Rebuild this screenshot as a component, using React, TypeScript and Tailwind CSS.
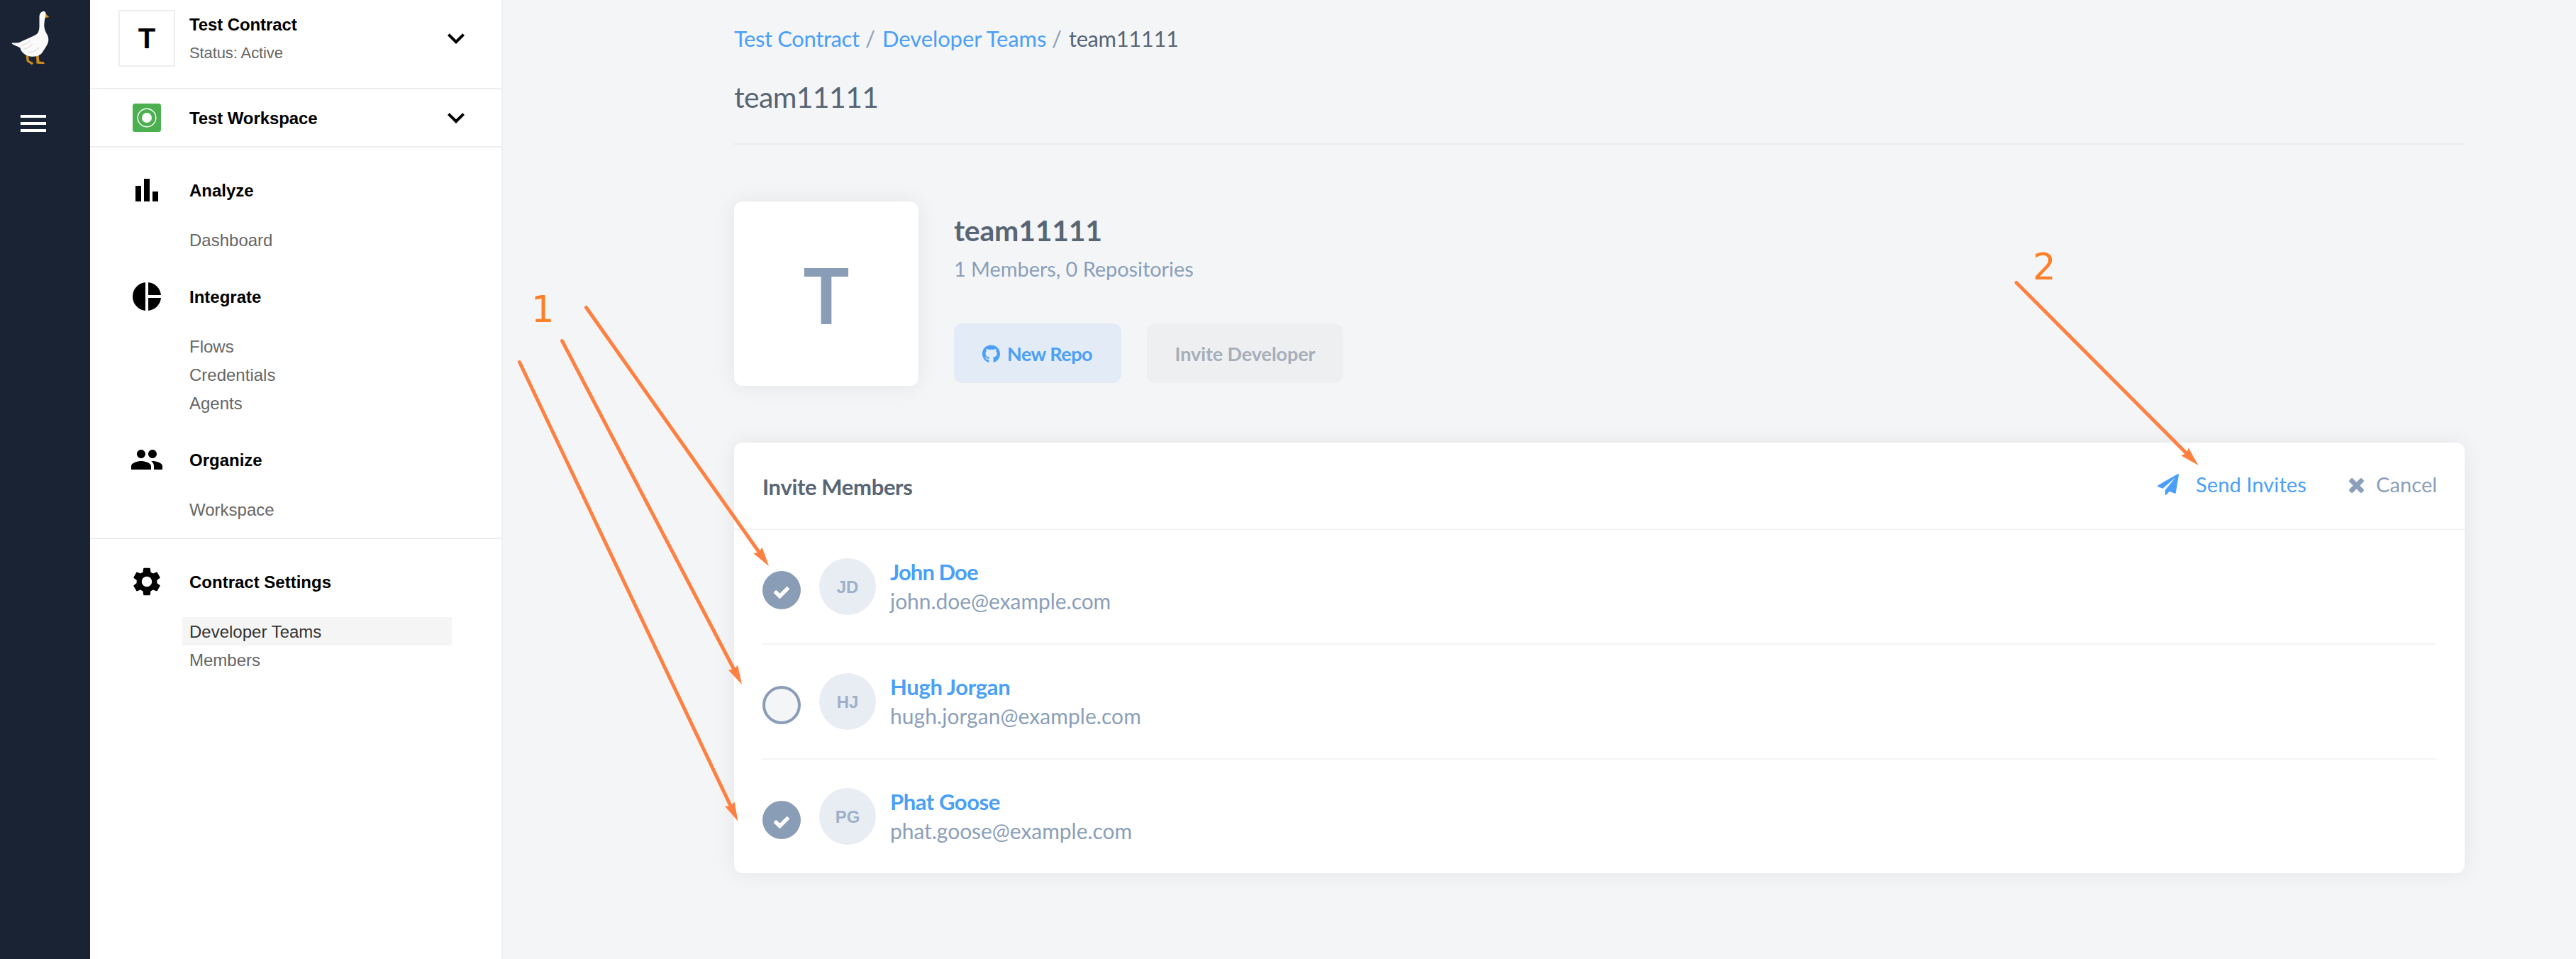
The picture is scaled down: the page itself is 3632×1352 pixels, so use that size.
import React from "react";
import { MdBarChart, MdExpandMore, MdMenu, MdPeople, MdPieChart, MdSettings } from "react-icons/md";
import { FaGithub } from "react-icons/fa";
import type { IconType } from "react-icons";

function GooseLogo() {
  return (
    <svg viewBox="0 0 60 84" className="ml-[14px] mt-[12px] h-[84px] w-[60px]" fill="none">
      <path d="M23 65.5 L23.5 71 L26 76 L31 79.5 L33 77 L28 76 L26.5 71 L26.5 65.5Z" fill="#c98a1c" />
      <path d="M37 65 L37.5 77.5 L49 78 L47.5 75.5 L41.5 74.5 L40.5 65Z" fill="#c98a1c" />
      <path d="M24 66 L25 74 L32 77.5 M39 66 L39.3 76 L48 77" stroke="#cf8e1c" strokeWidth="2.6" />
      <path d="M49 6 L55.4 12 L50 13.2 L48.5 8Z" fill="#cf8e1c" />
      <path
        d="M41.5 11 C42 5.5 45.5 3.5 48 4 C50.5 4.4 51 7 50.2 10 C49.2 14 48.5 18 48.3 22 C48 27 49.3 31 51.5 35 C55 40.5 55.2 46 52.5 51 C50 55.5 47.5 59 45 63 C41 67.5 33 69 26.5 67 C20 65 15.5 61 14.5 55.5 C11 53.5 6.5 52 3.3 50 C2 49 3 48 5 48.2 C9 48.6 11.5 48.4 14 47.5 C22 43.5 33 39.5 38 36 C41 33.5 41.6 28 41.5 23Z"
        fill="#fafafa"
      />
      <path d="M16 52 C21 51 25 49 29 45 M19 57 C24 57 28 54 32 50 M25 62 C31 62 37 59 41 55" stroke="#e2e2e2" strokeWidth="1.4" />
    </svg>
  );
}

function CheckIcon() {
  return (
    <svg viewBox="121 334 1550 1188" className="mt-[6px] h-[17px] w-[22px]" fill="#fff">
      <path d="M1671 566q0 40-28 68l-724 724-136 136q-28 28-68 28t-68-28l-136-136-362-362q-28-28-28-68t28-68l136-136q28-28 68-28t68 28l294 295 656-657q28-28 68-28t68 28l136 136q28 28 28 68z" />
    </svg>
  );
}

function PlaneIcon() {
  return (
    <svg viewBox="0 0 1792 1792" className="mt-[6px] h-[30px] w-[30px]" fill="#4a9ff8">
      <path d="M1764 11q33 24 27 64l-256 1536q-5 29-32 45-14 8-31 8-11 0-24-5l-453-185-242 295q-18 23-49 23-13 0-22-4-19-7-30.5-23.5t-11.5-36.5v-349l864-1059-1069 925-395-162q-37-14-40-55-2-40 32-59l1664-960q15-9 32-9 20 0 36 11z" />
    </svg>
  );
}

function CrossIcon() {
  return (
    <svg viewBox="302 366 1188 1188" className="mt-[12px] h-[21px] w-[21px]" fill="#8b9fba">
      <path d="M1490 1322q0 40-28 68l-136 136q-28 28-68 28t-68-28l-294-294-294 294q-28 28-68 28t-68-28l-136-136q-28-28-28-68t28-68l294-294-294-294q-28-28-28-68t28-68l136-136q28-28 68-28t68 28l294 294 294-294q28-28 68-28t68 28l136 136q28 28 28 68t-28 68l-294 294 294 294q28 28 28 68z" />
    </svg>
  );
}

function WorkspaceIcon() {
  return (
    <svg viewBox="0 0 40 40" className="ml-5 h-10 w-10" fill="none">
      <rect width="40" height="40" rx="3.5" fill="#4caf50" />
      <circle cx="20" cy="20" r="12.8" stroke="#fff" strokeWidth="1.4" />
      <circle cx="20" cy="20" r="7" fill="#fff" />
    </svg>
  );
}

type NavSection = { title: string; icon: IconType; items: string[]; active?: string };

const workspaceSections: NavSection[] = [
  { title: "Analyze", icon: MdBarChart, items: ["Dashboard"] },
  { title: "Integrate", icon: MdPieChart, items: ["Flows", "Credentials", "Agents"] },
  { title: "Organize", icon: MdPeople, items: ["Workspace"] },
];

const settingsSection: NavSection = {
  title: "Contract Settings",
  icon: MdSettings,
  items: ["Developer Teams", "Members"],
  active: "Developer Teams",
};

function Section({ title, icon: Icon, items, active }: NavSection) {
  return (
    <section className="pt-9">
      <h3 className="flex h-12 items-center gap-9 pl-14 text-[24px] font-bold text-black">
        <Icon className="h-12 w-12 shrink-0" />
        <span className="pt-0.5 leading-10">{title}</span>
      </h3>
      <ul className="pt-[26px] pl-[130px] text-[24px] leading-[42px] text-[#666]">
        {items.map((item) => (
          <li
            key={item}
            className={item === active ? "h-10 w-[380px] bg-[#f5f5f5] pl-[10px] text-[#333]" : "h-10 w-[380px] pl-[10px]"}
          >
            {item}
          </li>
        ))}
      </ul>
    </section>
  );
}

function Sidebar() {
  return (
    <nav className="w-[582px] shrink-0 border-r-2 border-[#eeeff0] bg-white font-['Liberation_Sans',Arial,sans-serif]">
      <div className="flex h-[126px] items-start border-b-2 border-[#eee] pt-[14px] pl-10">
        <div className="flex h-20 w-20 items-center justify-center border-2 border-[#eee] text-[40px] leading-none font-bold text-black">
          T
        </div>
        <div className="ml-5 w-[352px] pt-px">
          <p className="text-[24px] leading-10 font-bold tracking-[-0.1px] text-black">Test Contract</p>
          <p className="text-[22px] leading-10 tracking-[-0.1px] text-[#666]">Status: Active</p>
        </div>
        <MdExpandMore className="mt-4 h-12 w-12 text-black" />
      </div>
      <div className="flex h-[82px] items-center border-b-2 border-[#eee] pl-10">
        <WorkspaceIcon />
        <p className="ml-10 w-[352px] pt-0.5 text-[24px] leading-10 font-bold tracking-[-0.1px] text-black">Test Workspace</p>
        <MdExpandMore className="h-12 w-12 text-black" />
      </div>
      <div className="border-b-2 border-[#eee] pb-5">
        {workspaceSections.map((s) => (
          <Section key={s.title} {...s} />
        ))}
      </div>
      <Section {...settingsSection} />
    </nav>
  );
}

const members = [
  {
    initials: "JD",
    name: "John Doe",
    email: "john.doe@example.com",
    checked: true,
    nameClass: "tracking-[-0.9px]",
    emailClass: "tracking-[-0.05px]",
  },
  {
    initials: "HJ",
    name: "Hugh Jorgan",
    email: "hugh.jorgan@example.com",
    checked: false,
    nameClass: "tracking-[-0.35px]",
    emailClass: "tracking-[0.05px]",
  },
  {
    initials: "PG",
    name: "Phat Goose",
    email: "phat.goose@example.com",
    checked: true,
    nameClass: "tracking-[-0.45px]",
    emailClass: "tracking-[-0.05px]",
  },
];

function MemberRow({ member, last }: { member: (typeof members)[number]; last: boolean }) {
  return (
    <li className={last ? "flex h-[160px] pt-10" : "flex h-[162px] border-b-2 border-[#f3f4f6] pt-10"}>
      {member.checked ? (
        <span className="mt-[18px] flex h-[54px] w-[54px] items-center justify-center rounded-full bg-[#8a9db7]">
          <CheckIcon />
        </span>
      ) : (
        <span className="mt-[18px] h-[54px] w-[54px] rounded-full border-4 border-[#8a9db7] bg-[#f4f5f7]" />
      )}
      <span className="ml-[26px] flex h-20 w-20 items-center justify-center rounded-full bg-[#e8edf4] pt-0.5 font-['Liberation_Sans',Arial,sans-serif] text-[24px] leading-10 font-bold text-[#9eb0c8]">
        {member.initials}
      </span>
      <div className="ml-5">
        <p className={`text-[31px] leading-[39px] font-bold text-[#4a9ff8] ${member.nameClass}`}>{member.name}</p>
        <p className={`text-[30px] leading-[43px] text-[#8b9fba] ${member.emailClass}`}>{member.email}</p>
      </div>
    </li>
  );
}

function Arrow({ x1, y1, x2, y2 }: { x1: number; y1: number; x2: number; y2: number }) {
  const angle = (Math.atan2(y2 - y1, x2 - x1) * 180) / Math.PI;
  const length = Math.hypot(x2 - x1, y2 - y1);
  return (
    <g transform={`translate(${x1} ${y1}) rotate(${angle})`} fill="#ff8040">
      <line x2={length - 20} stroke="#ff8040" strokeWidth="5" strokeLinecap="round" />
      <path d={`M${length} 0 l-27 -7.5 l3 7.5 l-3 7.5z`} />
    </g>
  );
}

function Annotations() {
  return (
    <div className="pointer-events-none absolute inset-0 font-['DejaVu_Sans',sans-serif] text-[51px] leading-[60px] text-[#ff7f27]">
      <svg viewBox="0 0 3632 1352" className="absolute inset-0 h-full w-full">
        <Arrow x1={826.5} y1={433.5} x2={1084} y2={798} />
        <Arrow x1={792.5} y1={480.5} x2={1046} y2={965} />
        <Arrow x1={732.5} y1={510.5} x2={1040.5} y2={1158} />
        <Arrow x1={2843} y1={398.5} x2={3099.5} y2={656} />
      </svg>
      <span className="absolute top-[407px] left-[749px]">1</span>
      <span className="absolute top-[347px] left-[2866px]">2</span>
    </div>
  );
}

export default function App() {
  return (
    <div className="relative flex h-[1352px] w-[3632px] overflow-hidden bg-[#f4f5f7]">
      <aside className="w-[127px] shrink-0 bg-[#1a2333]">
        <GooseLogo />
        <MdMenu className="mt-[54px] ml-[23px] h-12 w-12 text-white" />
      </aside>
      <Sidebar />

      <main className="ml-[326px] w-[2440px] pt-[34px] font-['Lato',sans-serif]">
        <div className="flex h-10 text-[31px] leading-10 whitespace-nowrap text-[#8b9fba]">
          <span className="w-[185px] tracking-[-0.4px] text-[#4a9ff8]">Test Contract</span>
          <span className="w-[24px]">/</span>
          <span className="w-[239px] tracking-[-0.1px] text-[#4a9ff8]">Developer Teams</span>
          <span className="w-[24px]">/</span>
          <span className="tracking-[-0.4px] text-[#586574]">team11111</span>
        </div>
        <h1 className="mt-8 h-24 text-[41px] leading-[61px] tracking-[-0.65px] text-[#586574]">team11111</h1>
        <div className="h-0.5 bg-[#e9ebed]" />

        <section className="mt-20 flex h-[260px]">
          <div className="flex w-[260px] items-center justify-center rounded-xl bg-white text-[109px] leading-none font-bold text-[#8a9db7] shadow-[0_0_30px_rgba(0,0,0,0.07)]">
            T
          </div>
          <div className="ml-[50px] pt-4">
            <h2 className="text-[41px] leading-[50px] font-bold tracking-[-0.25px] text-[#586574]">team11111</h2>
            <p className="mt-[9px] text-[29px] leading-10 tracking-[-0.08px] text-[#8b9fba]">1 Members, 0 Repositories</p>
            <div className="mt-[57px] flex gap-9 text-[27px] leading-10 font-bold">
              <button className="flex h-[84px] w-[236px] items-center rounded-xl bg-[#e3ebf6] pt-0.5 pl-10 tracking-[-0.5px] text-[#4a9ff8]">
                <FaGithub className="mr-[10px] h-[26px] w-[25px]" />
                New Repo
              </button>
              <button className="h-[84px] w-[277px] rounded-xl bg-[#eeeff1] pt-0.5 tracking-[-0.1px] text-[#a6aeb9]">
                Invite Developer
              </button>
            </div>
          </div>
        </section>

        <section className="mt-20 rounded-xl bg-white shadow-[0_0_30px_rgba(0,0,0,0.07)]">
          <header className="flex h-[123px] justify-between border-b-2 border-[#f3f4f6] px-10">
            <h2 className="mt-[42px] text-[31px] leading-10 font-bold tracking-[-0.35px] text-[#586574]">Invite Members</h2>
            <div className="mt-[38px] flex items-start text-[29px] leading-[42px] tracking-[0.1px] whitespace-nowrap">
              <PlaneIcon />
              <span className="ml-[24px] w-[156px] text-[#4a9ff8]">Send Invites</span>
              <span className="ml-[60px]">
                <CrossIcon />
              </span>
              <span className="ml-[17px] w-[85px] text-[#8b9fba]">Cancel</span>
            </div>
          </header>
          <ul className="px-10">
            {members.map((m, i) => (
              <MemberRow key={m.initials} member={m} last={i === members.length - 1} />
            ))}
          </ul>
        </section>
      </main>

      <Annotations />
    </div>
  );
}
